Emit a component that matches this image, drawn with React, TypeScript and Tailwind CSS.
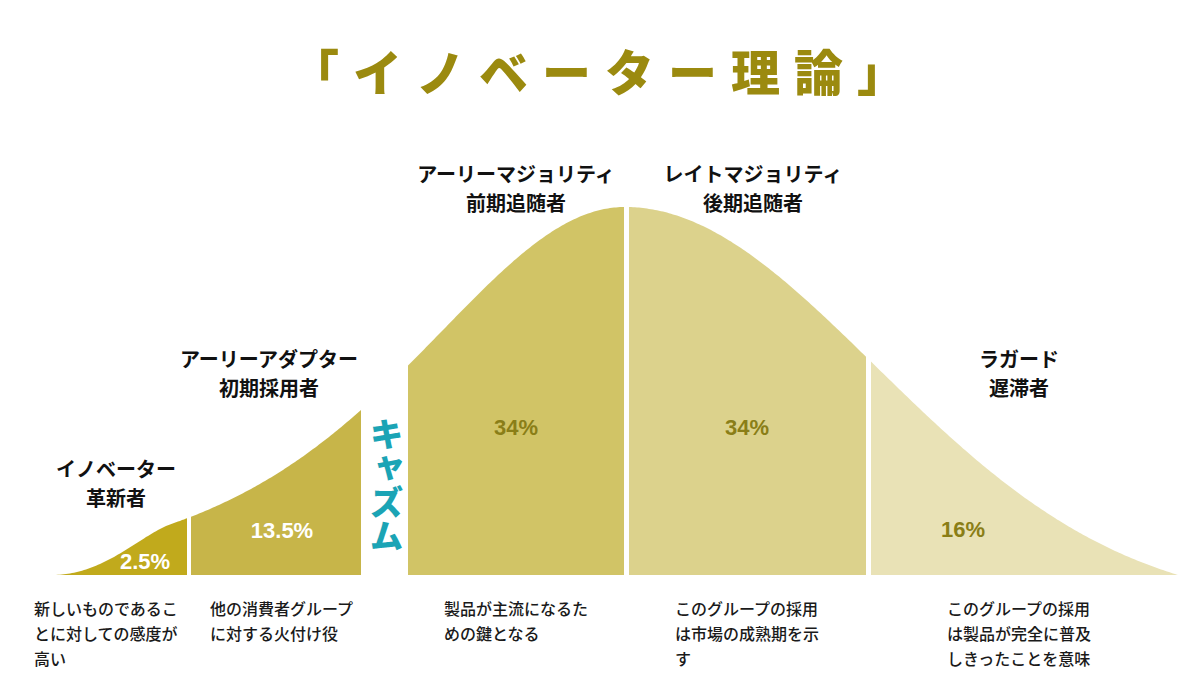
import React from 'react';

const JP = "font-['Noto_Sans_CJK_JP','Noto_Sans',sans-serif]";

// bell curve drawn in page coordinates (baseline y=575, peak at x=625)
const curveY = (x: number) => {
  const mu = 625;
  const base = 575;
  const h = 368;
  if (x <= mu) {
    const c = Math.cosh((mu - x) / 276);
    const t = Math.min(1, Math.max(0, (x - 52) / 120));
    return base - (h / (c * c)) * t * t * (3 - 2 * t);
  }
  const s = 250;
  const g = (d: number) => Math.exp(-0.5 * (d / s) ** 2);
  const ge = g(1178 - mu);
  return base - Math.max(0, (h * (g(x - mu) - ge)) / (1 - ge));
};

const segmentPath = (x0: number, x1: number) => {
  const pts: string[] = [`M${x0},575`];
  for (let x = x0; x < x1; x += 2) pts.push(`L${x},${curveY(x).toFixed(1)}`);
  pts.push(`L${x1},${curveY(x1).toFixed(1)}`, `L${x1},575`, 'Z');
  return pts.join(' ');
};

const segments = [
  { from: 52, to: 187, color: '#c1aa1c' },
  { from: 191, to: 361, color: '#c7b549' },
  { from: 408, to: 624, color: '#d1c466' },
  { from: 629, to: 866, color: '#dcd28c' },
  { from: 871, to: 1178, color: '#e9e2b6' },
];

const groups = [
  { cx: 116, top: 314, name: 'イノベーター', jp: '革新者' },
  { cx: 269, top: 204, name: 'アーリーアダプター', jp: '初期採用者' },
  { cx: 516, top: 19, name: 'アーリーマジョリティ', jp: '前期追随者' },
  { cx: 753, top: 19, name: 'レイトマジョリティ', jp: '後期追随者' },
  { cx: 1019, top: 204, name: 'ラガード', jp: '遅滞者' },
];

const shares = [
  { cx: 145, cy: 422, value: '2.5%', light: true },
  { cx: 282, cy: 391, value: '13.5%', light: true },
  { cx: 516, cy: 288, value: '34%', light: false },
  { cx: 747, cy: 288, value: '34%', light: false },
  { cx: 963, cy: 390, value: '16%', light: false },
];

const notes = [
  { width: 'w-[176px]', lines: ['新しいものであるこ', 'とに対しての感度が', '高い'] },
  { width: 'w-[234px]', lines: ['他の消費者グループ', 'に対する火付け役'] },
  { width: 'w-[231px]', lines: ['製品が主流になるた', 'めの鍵となる'] },
  { width: 'w-[272px]', lines: ['このグループの採用', 'は市場の成熟期を示', 'す'] },
  { width: 'w-[200px]', lines: ['このグループの採用', 'は製品が完全に普及', 'しきったことを意味'] },
];

export default function App() {
  return (
    <div className={`w-[1200px] h-[677px] bg-white overflow-hidden flex flex-col ${JP}`}>
      <div className="h-[140px] pt-[45px] flex justify-center">
        <h1 className="text-[49px] leading-[49px] font-black tracking-[14px] text-[#9b8a0f] pl-[10px]">
          「イノベーター理論」
        </h1>
      </div>

      <div className="relative h-[440px]">
        <svg className="block" width={1200} height={440} viewBox="0 140 1200 440">
          {segments.map((s) => (
            <path key={s.from} d={segmentPath(s.from, s.to)} fill={s.color} />
          ))}
        </svg>

        {groups.map((g) => (
          <div
            key={g.name}
            className="absolute w-[240px] text-center text-[20px] leading-[29px] font-bold text-[#111]"
            style={{ left: g.cx - 120, top: g.top }}
          >
            <div>{g.name}</div>
            <div>{g.jp}</div>
          </div>
        ))}

        {shares.map((s, i) => (
          <div
            key={i}
            className={`absolute w-[100px] text-center text-[22px] leading-[26px] font-bold font-['Liberation_Sans',sans-serif] ${
              s.light ? 'text-white' : 'text-[#8a7e17]'
            }`}
            style={{ left: s.cx - 50, top: s.cy - 13 }}
          >
            {s.value}
          </div>
        ))}

        <div className="absolute left-[366px] top-[277px] w-[40px] h-[140px] flex justify-center">
          <span className="[writing-mode:vertical-rl] text-[34px] leading-[40px] font-black text-[#1ba4b5]">
            キャズム
          </span>
        </div>
      </div>

      <div className="flex pl-[34px] pt-[16px] text-[16px] leading-[25px] font-medium text-[#1a1a1a]">
        {notes.map((n, i) => (
          <div key={i} className={`${n.width} shrink-0`}>
            {n.lines.map((l) => (
              <div key={l} className="whitespace-nowrap">
                {l}
              </div>
            ))}
          </div>
        ))}
      </div>
    </div>
  );
}
